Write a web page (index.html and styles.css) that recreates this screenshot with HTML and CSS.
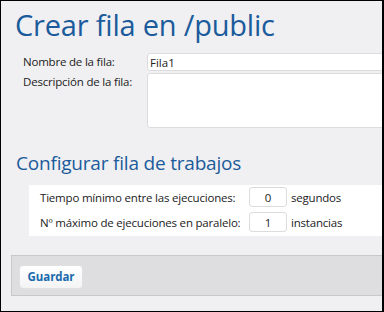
FILE: index.html
```html
<!DOCTYPE html>
<html lang="es">
<head>
<meta charset="utf-8">
<title>Crear fila en /public</title>
<link rel="stylesheet" href="styles.css">
</head>
<body>
<div class="page">
  <h1 class="title">Crear fila en /public</h1>
  <div class="form">
    <label class="label" for="nombre">Nombre de la fila:</label>
    <div class="field"><input id="nombre" class="input" type="text" value="Fila1"></div>
    <label class="label" for="desc">Descripción de la fila:</label>
    <div class="field"><textarea id="desc" class="textarea"></textarea></div>
  </div>
  <h2 class="subtitle">Configurar fila de trabajos</h2>
  <div class="panel">
    <div class="row">
      <span class="row-label">Tiempo mínimo entre las ejecuciones:</span>
      <input class="num" type="text" value="0">
      <span class="unit">segundos</span>
    </div>
    <div class="row">
      <span class="row-label">Nº máximo de ejecuciones en paralelo:</span>
      <input class="num" type="text" value="1">
      <span class="unit">instancias</span>
    </div>
  </div>
  <div class="footer">
    <button class="btn" type="button">Guardar</button>
  </div>
</div>
</body>
</html>
```
FILE: styles.css
```css
html, body {
  margin: 0;
  padding: 0;
}
body {
  font-family: "Open Sans", "Noto Sans", sans-serif;
  color: #222;
}
.page {
  box-sizing: border-box;
  width: 384px;
  height: 312px;
  border: 1px solid #000;
  border-right-width: 2px;
  background: #f0f0f2;
  overflow: hidden;
}
.title {
  margin: 0;
  padding: 4px 0 0 14px;
  font-size: 29px;
  font-weight: 400;
  line-height: 40px;
  color: #1b5b9b;
  white-space: nowrap;
  letter-spacing: -0.2px;
}
.form {
  display: grid;
  grid-template-columns: 124px 260px;
  row-gap: 2px;
  margin: 8px 0 0 22px;
}
.label {
  font-size: 11.5px;
  line-height: 16px;
  padding-top: 1px;
  letter-spacing: -0.2px;
  white-space: nowrap;
}
.field {
  min-width: 0;
}
.input, .textarea {
  box-sizing: border-box;
  display: block;
  width: 260px;
  margin: 0;
  border: 1px solid #dcdcdc;
  border-radius: 3px;
  background: #fff;
  font-family: inherit;
  font-size: 11.5px;
  color: #222;
  outline: none;
}
.input {
  height: 18px;
  padding: 0 2px;
  line-height: 16px;
}
.textarea {
  height: 55px;
  resize: none;
  padding: 2px;
}
.subtitle {
  margin: 22px 0 0 15px;
  font-size: 19px;
  font-weight: 400;
  line-height: 26px;
  color: #1b5b9b;
  white-space: nowrap;
  letter-spacing: -0.2px;
}
.panel {
  margin: 9px 0 0 28px;
  background: #fff;
  padding: 2px 0 4px 11px;
  display: flex;
  flex-direction: column;
  gap: 5px;
}
.row {
  display: flex;
  align-items: center;
  gap: 4px;
  font-size: 11.5px;
  letter-spacing: -0.2px;
  white-space: nowrap;
}
.row-label {
  width: 205px;
}
.num {
  box-sizing: border-box;
  width: 38px;
  height: 20px;
  margin: 0;
  border: 1px solid #dcdcdc;
  border-radius: 3px;
  text-align: center;
  font-family: inherit;
  font-size: 11.5px;
  color: #222;
  background: #fff;
  outline: none;
}
.footer {
  margin: 19px 0 0 10px;
  height: 41px;
  box-sizing: border-box;
  background: #dedee0;
  border: 1px solid #c8c8c8;
  border-right: none;
  padding: 8px 0 0 7px;
}
.btn {
  box-sizing: border-box;
  width: 64px;
  height: 24px;
  border: 1px solid #e0e0e0;
  border-radius: 4px;
  background: linear-gradient(#ffffff, #f4f4f4);
  color: #1a6aae;
  font-family: inherit;
  font-weight: 700;
  font-size: 11.5px;
  letter-spacing: -0.1px;
  padding: 0;
}
```
